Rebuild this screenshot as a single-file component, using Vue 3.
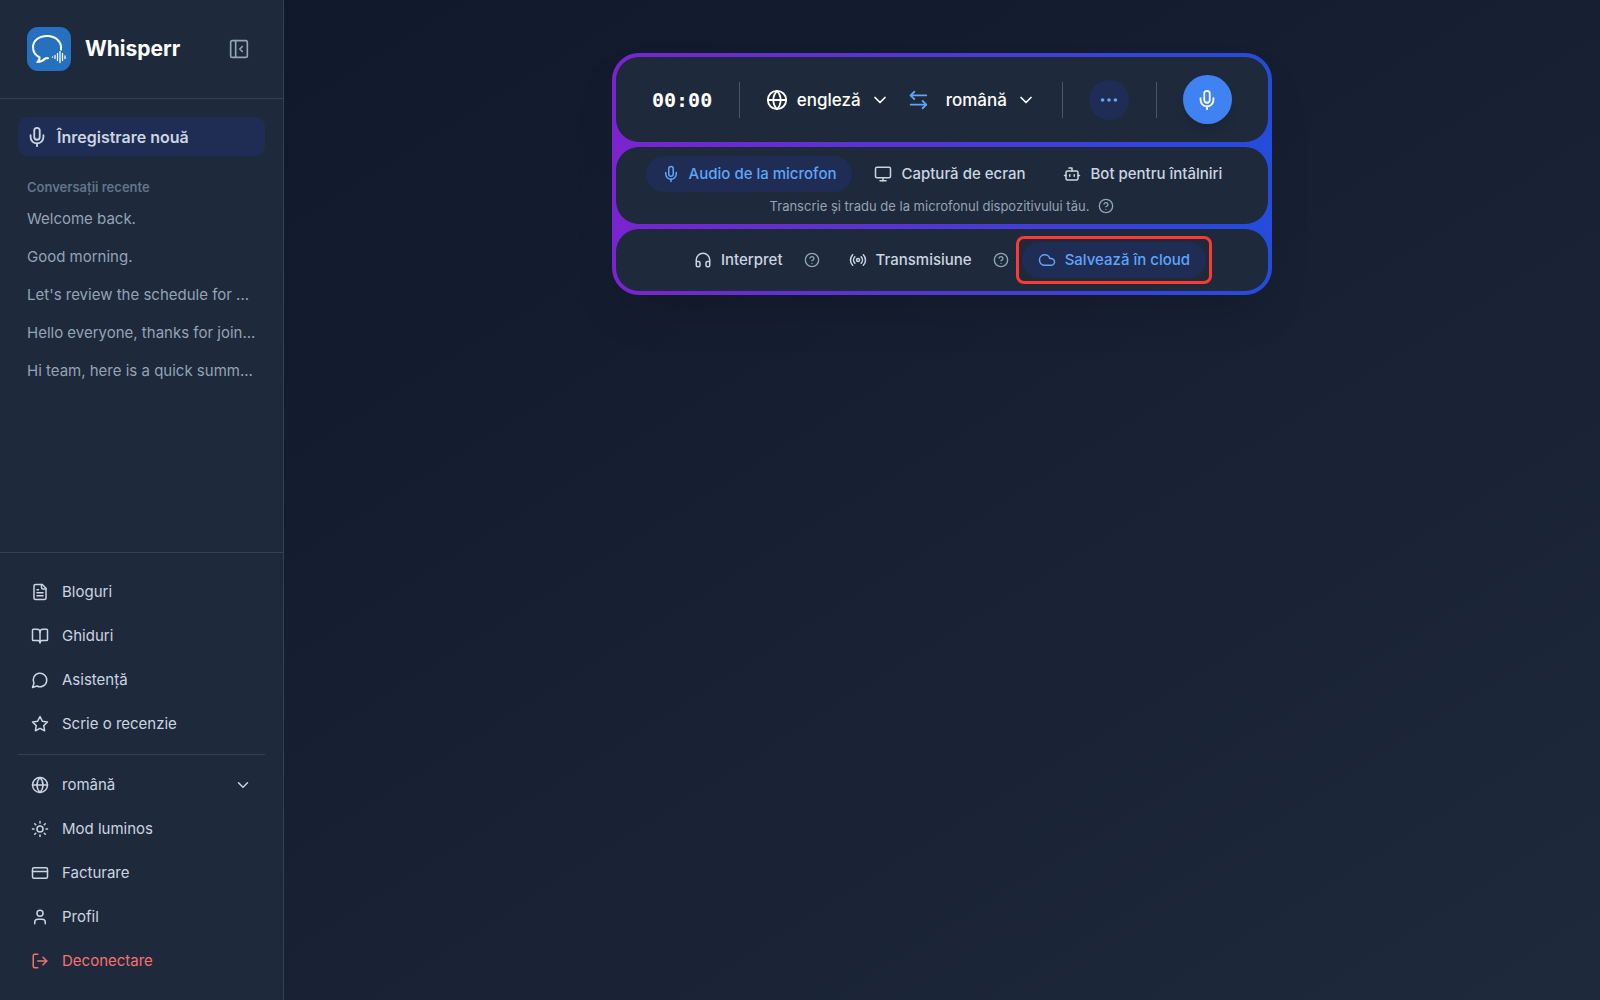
<script setup>
import { ref } from 'vue'

const conversations = [
  'Welcome back.',
  'Good morning.',
  "Let's review the schedule for ...",
  'Hello everyone, thanks for join...',
  'Hi team, here is a quick summ...',
]

const icons = {
  mic: '<path d="M12 2a3 3 0 0 0-3 3v7a3 3 0 0 0 6 0V5a3 3 0 0 0-3-3Z"/><path d="M19 10v2a7 7 0 0 1-14 0v-2"/><path d="M12 19v3"/>',
  panel: '<rect width="20" height="20" x="2" y="2" rx="2"/><path d="M8 2v20"/><path d="m16 9-3 3 3 3"/>',
  file: '<path d="M15 2H6a2 2 0 0 0-2 2v16a2 2 0 0 0 2 2h12a2 2 0 0 0 2-2V7Z"/><path d="M14 2v4a2 2 0 0 0 2 2h4"/><path d="M10 9H8"/><path d="M16 13H8"/><path d="M16 17H8"/>',
  book: '<path d="M12 7v14"/><path d="M3 18a1 1 0 0 1-1-1V4a1 1 0 0 1 1-1h5a4 4 0 0 1 4 4 4 4 0 0 1 4-4h5a1 1 0 0 1 1 1v13a1 1 0 0 1-1 1h-6a3 3 0 0 0-3 3 3 3 0 0 0-3-3z"/>',
  chat: '<path d="M7.9 20A9 9 0 1 0 4 16.1L2 22Z"/>',
  star: '<path d="m12 2 3.09 6.26L22 9.27l-5 4.87 1.18 6.88L12 17.77l-6.18 3.25L7 14.14 2 9.27l6.91-1.01L12 2z"/>',
  globe: '<circle cx="12" cy="12" r="10"/><path d="M12 2a14.5 14.5 0 0 0 0 20 14.5 14.5 0 0 0 0-20"/><path d="M2 12h20"/>',
  sun: '<circle cx="12" cy="12" r="4"/><path d="M12 2v2M12 20v2M4.93 4.93l1.41 1.41M17.66 17.66l1.41 1.41M2 12h2M20 12h2M6.34 17.66l-1.41 1.41M19.07 4.93l-1.41 1.41"/>',
  card: '<rect width="20" height="14" x="2" y="5" rx="2"/><path d="M2 10h20"/>',
  user: '<path d="M19 21v-2a4 4 0 0 0-4-4H9a4 4 0 0 0-4 4v2"/><circle cx="12" cy="7" r="4"/>',
  logout: '<path d="M9 21H5a2 2 0 0 1-2-2V5a2 2 0 0 1 2-2h4"/><path d="m16 17 5-5-5-5"/><path d="M21 12H9"/>',
  chevron: '<path d="m6 9 6 6 6-6"/>',
  swap: '<path d="M8 3 4 7l4 4"/><path d="M4 7h17"/><path d="m17 21 4-4-4-4"/><path d="M21 17H4"/>',
  dots: '<circle cx="12" cy="12" r="1"/><circle cx="19" cy="12" r="1"/><circle cx="5" cy="12" r="1"/>',
  monitor: '<rect width="20" height="14" x="2" y="3" rx="2"/><path d="M8 21h8"/><path d="M12 17v4"/>',
  bot: '<path d="M12 8V4H8"/><rect width="16" height="12" x="4" y="8" rx="2"/><path d="M2 14h2"/><path d="M20 14h2"/><path d="M15 13v2"/><path d="M9 13v2"/>',
  help: '<circle cx="12" cy="12" r="10"/><path d="M9.09 9a3 3 0 0 1 5.83 1c0 2-3 3-3 3"/><path d="M12 17h.01"/>',
  headphones: '<path d="M3 14h3a2 2 0 0 1 2 2v3a2 2 0 0 1-2 2H5a2 2 0 0 1-2-2v-7a9 9 0 0 1 18 0v7a2 2 0 0 1-2 2h-1a2 2 0 0 1-2-2v-3a2 2 0 0 1 2-2h3"/>',
  radio: '<path d="M4.9 19.1C1 15.2 1 8.8 4.9 4.9"/><path d="M7.8 16.2c-2.3-2.3-2.3-6.1 0-8.5"/><circle cx="12" cy="12" r="2"/><path d="M16.2 7.8c2.3 2.3 2.3 6.1 0 8.5"/><path d="M19.1 4.9C23 8.8 23 15.1 19.1 19"/>',
  cloud: '<path d="M17.5 19H9a7 7 0 1 1 6.71-9h1.79a4.5 4.5 0 1 1 0 9Z"/>',
}

const links = [
  { icon: 'file', label: 'Bloguri' },
  { icon: 'book', label: 'Ghiduri' },
  { icon: 'chat', label: 'Asistență' },
  { icon: 'star', label: 'Scrie o recenzie' },
]

const sources = [
  { icon: 'mic', label: 'Audio de la microfon' },
  { icon: 'monitor', label: 'Captură de ecran' },
  { icon: 'bot', label: 'Bot pentru întâlniri' },
]

const languages = ['engleză', 'română']
const uiLanguage = ref('română')
const from = ref('engleză')
const to = ref('română')
const source = ref(0)
const saveToCloud = ref(true)

function swapLanguages() {
  const previous = from.value
  from.value = to.value
  to.value = previous
}
</script>

<template>
  <div class="app">
    <aside class="sidebar">
      <header class="brand">
        <svg class="logo" viewBox="0 0 44 44" aria-hidden="true">
          <rect width="44" height="44" rx="11" fill="#2670c0" />
          <g fill="none" stroke="#fff" stroke-linecap="round" stroke-linejoin="round">
            <path stroke-width="2" d="M34 22.500C35 15 29 9 20 9 11.500 9 6 14 6 20.300c0 4.500 2.600 8.100 6.600 10.100.300 1.800-.900 3.400-2.300 4.600 3.400-.200 6.200-1.700 8.300-3.800h2.400" />
            <path stroke-width="1.300" d="M25.500 29.800v.4M28 28.500v3M30.500 26.500v7M33 24.500v11M35.500 26.500v7M38 29v2.500" />
          </g>
        </svg>
        <h1>Whisperr</h1>
        <button class="collapse" type="button" aria-label="Restrânge bara laterală">
          <svg class="icon" viewBox="0 0 24 24" v-html="icons.panel"></svg>
        </button>
      </header>

      <div class="history">
        <button class="new" type="button">
          <svg class="icon large" viewBox="0 0 24 24" v-html="icons.mic"></svg>
          Înregistrare nouă
        </button>
        <h2>Conversații recente</h2>
        <ul>
          <li v-for="item in conversations" :key="item"><a href="#">{{ item }}</a></li>
        </ul>
      </div>

      <nav class="menu">
        <a v-for="link in links" :key="link.label" class="row" href="#">
          <svg class="icon" viewBox="0 0 24 24" v-html="icons[link.icon]"></svg>{{ link.label }}
        </a>
        <hr />
        <label class="row">
          <svg class="icon" viewBox="0 0 24 24" v-html="icons.globe"></svg>
          <select v-model="uiLanguage" class="grow" aria-label="Limba interfeței">
            <option v-for="l in languages" :key="l">{{ l }}</option>
          </select>
          <svg class="icon" viewBox="0 0 24 24" v-html="icons.chevron"></svg>
        </label>
        <button class="row" type="button">
          <svg class="icon" viewBox="0 0 24 24" v-html="icons.sun"></svg>Mod luminos
        </button>
        <a class="row" href="#">
          <svg class="icon" viewBox="0 0 24 24" v-html="icons.card"></svg>Facturare
        </a>
        <a class="row" href="#">
          <svg class="icon" viewBox="0 0 24 24" v-html="icons.user"></svg>Profil
        </a>
        <button class="row danger" type="button">
          <svg class="icon" viewBox="0 0 24 24" v-html="icons.logout"></svg>Deconectare
        </button>
      </nav>
    </aside>

    <main class="stage">
      <section class="recorder">
        <div class="panel controls">
          <time class="timer">00:00</time>
          <span class="divider"></span>
          <div class="languages">
            <label class="language">
              <svg class="icon large" viewBox="0 0 24 24" v-html="icons.globe"></svg>
              <select v-model="from" aria-label="Din limba">
                <option v-for="l in languages" :key="l">{{ l }}</option>
              </select>
              <svg class="icon arrow" viewBox="0 0 24 24" v-html="icons.chevron"></svg>
            </label>
            <button class="swap" type="button" aria-label="Inversează limbile" @click="swapLanguages">
              <svg class="icon large" viewBox="0 0 24 24" v-html="icons.swap"></svg>
            </button>
            <label class="language">
              <select v-model="to" aria-label="În limba">
                <option v-for="l in languages" :key="l">{{ l }}</option>
              </select>
              <svg class="icon arrow" viewBox="0 0 24 24" v-html="icons.chevron"></svg>
            </label>
          </div>
          <span class="divider"></span>
          <button class="more" type="button" aria-label="Mai multe opțiuni">
            <svg class="icon large" viewBox="0 0 24 24" v-html="icons.dots"></svg>
          </button>
          <span class="divider"></span>
          <button class="record" type="button" aria-label="Începe înregistrarea">
            <svg class="icon large" viewBox="0 0 24 24" v-html="icons.mic"></svg>
          </button>
        </div>

        <div class="panel sources">
          <div class="pills">
            <button
              v-for="(item, i) in sources"
              :key="item.label"
              class="pill"
              :class="{ active: source === i }"
              type="button"
              @click="source = i"
            >
              <svg class="icon" viewBox="0 0 24 24" v-html="icons[item.icon]"></svg>{{ item.label }}
            </button>
          </div>
          <p class="hint">
            Transcrie și tradu de la microfonul dispozitivului tău.
            <button class="help" type="button" aria-label="Ajutor">
              <svg class="icon" viewBox="0 0 24 24" v-html="icons.help"></svg>
            </button>
          </p>
        </div>

        <div class="panel options">
          <div class="option">
            <button class="pill" type="button">
              <svg class="icon" viewBox="0 0 24 24" v-html="icons.headphones"></svg>Interpret
            </button>
            <button class="help" type="button" aria-label="Ajutor Interpret">
              <svg class="icon" viewBox="0 0 24 24" v-html="icons.help"></svg>
            </button>
          </div>
          <div class="option">
            <button class="pill" type="button">
              <svg class="icon" viewBox="0 0 24 24" v-html="icons.radio"></svg>Transmisiune
            </button>
            <button class="help" type="button" aria-label="Ajutor Transmisiune">
              <svg class="icon" viewBox="0 0 24 24" v-html="icons.help"></svg>
            </button>
          </div>
          <button
            class="pill marked"
            :class="{ active: saveToCloud }"
            type="button"
            @click="saveToCloud = !saveToCloud"
          >
            <svg class="icon" viewBox="0 0 24 24" v-html="icons.cloud"></svg>Salvează în cloud
          </button>
        </div>
      </section>
    </main>
  </div>
</template>

<style>
body {
  margin: 0;
  background: #0f172a;
}
</style>

<style scoped>
* {
  box-sizing: border-box;
}
.app {
  display: flex;
  min-height: 100vh;
  font-family: Inter, 'Liberation Sans', sans-serif;
  font-size: 15px;
  line-height: 20px;
  color: #cbd5e1;
  background: linear-gradient(to bottom right, #0f172a, #1e293b);
}
button,
select {
  margin: 0;
  padding: 0;
  border: 0;
  background: none;
  color: inherit;
  font: inherit;
  cursor: pointer;
}
select {
  appearance: none;
  field-sizing: content;
  outline: none;
}
option {
  color: #0f172a;
}
a {
  color: inherit;
  text-decoration: none;
}
.icon {
  display: block;
  flex: none;
  width: 18px;
  height: 18px;
  fill: none;
  stroke: currentColor;
  stroke-width: 2;
  stroke-linecap: round;
  stroke-linejoin: round;
}
.icon.large {
  width: 22px;
  height: 22px;
}
.icon.arrow {
  width: 20px;
  height: 20px;
}

.sidebar {
  display: flex;
  flex: none;
  flex-direction: column;
  width: 284px;
  border-right: 1px solid #334155;
  background: #1e293b;
}
.brand {
  display: flex;
  align-items: center;
  gap: 14px;
  height: 99px;
  padding: 0 34px 0 27px;
  border-bottom: 1px solid #334155;
}
.logo {
  flex: none;
  width: 44px;
  height: 44px;
}
h1 {
  flex: 1;
  margin: 0;
  color: #fff;
  font-size: 21px;
  font-weight: 700;
  line-height: 28px;
}
.collapse {
  color: #94a3b8;
}
.collapse .icon {
  width: 20px;
  height: 20px;
}
.history {
  flex: 1;
  padding: 18px;
}
.new {
  display: flex;
  align-items: center;
  gap: 9px;
  width: 100%;
  height: 39px;
  padding: 0 8px;
  border-radius: 9px;
  background: #1f2c54;
  font-size: 16px;
  font-weight: 600;
}
h2 {
  margin: 22px 9px 4px;
  color: #64748b;
  font-size: 13px;
  font-weight: 600;
  line-height: 18px;
}
ul {
  margin: 0;
  padding: 0;
  list-style: none;
}
li a {
  display: block;
  padding: 9px;
  overflow: hidden;
  color: #94a3b8;
  white-space: nowrap;
}
.menu {
  padding: 17px 18px;
  border-top: 1px solid #334155;
}
.row {
  display: flex;
  align-items: center;
  gap: 13px;
  width: 100%;
  height: 44px;
  padding: 0 13px;
  cursor: pointer;
}
.grow {
  flex: 1;
}
hr {
  height: 1px;
  margin: 8px 0;
  border: 0;
  background: #334155;
}
.danger {
  color: #f87171;
}

.stage {
  flex: 1;
  padding: 53px 24px;
}
.recorder {
  display: flex;
  flex-direction: column;
  gap: 5px;
  max-width: 660px;
  margin: 0 auto;
  padding: 4px;
  border-radius: 27px;
  background: linear-gradient(to right, #7a24cf, #244cdb);
  box-shadow: 0 24px 48px -12px rgba(0, 0, 0, 0.2);
}
.panel {
  display: flex;
  align-items: center;
  justify-content: center;
  border-radius: 23px;
  background: #1e293b;
}
.controls {
  justify-content: space-between;
  height: 85px;
  padding: 0 36px;
  color: #fff;
}
.timer {
  font-family: 'DejaVu Sans Mono', 'Liberation Mono', monospace;
  font-size: 20px;
  font-weight: 700;
}
.divider {
  width: 1px;
  height: 36px;
  background: #475569;
}
.languages,
.language {
  display: flex;
  align-items: center;
}
.languages {
  gap: 17px;
}
.language {
  gap: 9px;
  font-size: 17px;
  font-weight: 500;
  line-height: 24px;
}
.swap {
  color: #60a5fa;
}
.more,
.record {
  display: grid;
  place-items: center;
  border-radius: 50%;
}
.more {
  width: 40px;
  height: 40px;
  background: #1f2c54;
  color: #60a5fa;
}
.record {
  width: 49px;
  height: 49px;
  background: #3f83f3;
  box-shadow: 0 8px 12px -3px rgba(0, 0, 0, 0.15);
}
.sources {
  flex-direction: column;
  gap: 4px;
  height: 77px;
}
.pills {
  display: flex;
  gap: 6px;
}
.pill {
  display: flex;
  align-items: center;
  gap: 9px;
  height: 36px;
  padding: 0 16px;
  border-radius: 18px;
  font-weight: 500;
  white-space: nowrap;
}
.active {
  background: #1f2c54;
  color: #60a5fa;
}
.hint {
  display: flex;
  align-items: center;
  gap: 9px;
  margin: 0;
  color: #94a3b8;
  font-size: 13px;
}
.help {
  color: #94a3b8;
}
.help .icon {
  width: 16px;
  height: 16px;
}
.options {
  gap: 13px;
  height: 62px;
}
.option {
  display: flex;
  align-items: center;
  gap: 5px;
}
.marked {
  position: relative;
}
.marked::after {
  content: '';
  position: absolute;
  inset: -6px;
  border: 3px solid #fb3b2f;
  border-radius: 8px;
}
</style>
